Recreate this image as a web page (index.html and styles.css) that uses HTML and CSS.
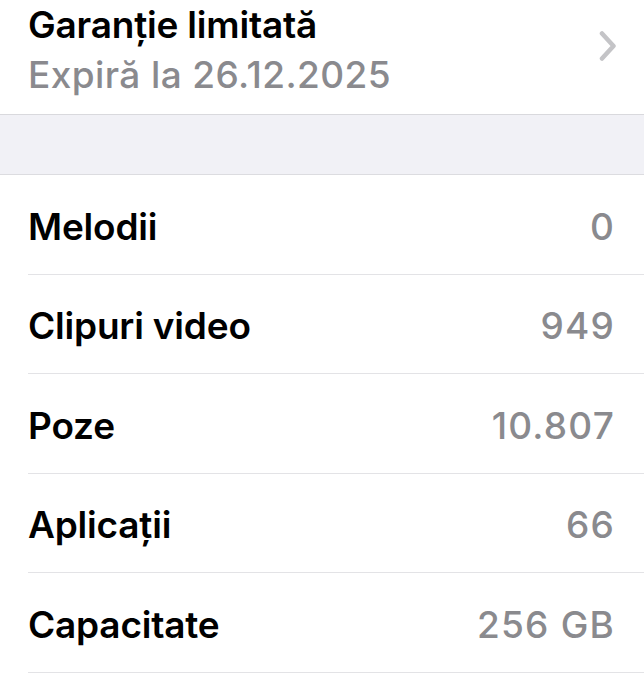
FILE: index.html
```html
<!DOCTYPE html>
<html lang="ro">

<head>
    <meta charset="UTF-8">
    <meta name="viewport" content="width=device-width, initial-scale=1.0">
    <title>Despre</title>
    <link rel="stylesheet" href="styles.css">
</head>

<body>
    <!-- Garantie -->
    <div class="warranty">
        <div class="warranty-text">
            <div class="warranty-title">Garanție limitată</div>
            <div class="warranty-sub">Expiră la 26.12.2025</div>
        </div>
        <svg class="chevron" width="18" height="32" viewBox="0 0 18 32">
            <path d="M3 3.5 L14.5 16 L3 28.5" fill="none" stroke="#c4c4c7" stroke-width="4.5" stroke-linecap="round" stroke-linejoin="round" />
        </svg>
    </div>

    <div class="group-gap"></div>

    <ul class="info-list">
        <li class="info-row">
            <span class="label">Melodii</span>
            <span class="value">0</span>
        </li>
        <li class="info-row">
            <span class="label">Clipuri video</span>
            <span class="value">949</span>
        </li>
        <li class="info-row">
            <span class="label">Poze</span>
            <span class="value">10.807</span>
        </li>
        <li class="info-row">
            <span class="label">Aplicații</span>
            <span class="value">66</span>
        </li>
        <li class="info-row">
            <span class="label">Capacitate</span>
            <span class="value">256 GB</span>
        </li>
    </ul>
</body>

</html>
```

FILE: styles.css
```css
* {
    box-sizing: border-box;
}

body {
    font-family: Inter, "Noto Sans", sans-serif;
    margin: 0;
    padding: 0;
    background-color: #fff;
    color: #000;
    overflow: hidden;
}

.warranty {
    height: 114px;
    display: flex;
    align-items: center;
    justify-content: space-between;
    padding: 0 27px 0 28px;
}

.warranty-text {
    margin-top: -14px;
}

.warranty-title,
.warranty-sub {
    font-size: 37px;
    line-height: 50px;
    font-weight: 600;
    letter-spacing: -0.2px;
}

.warranty-sub {
    color: #8a8a8e;
    font-weight: 500;
    letter-spacing: 0.4px;
}

.chevron {
    margin-top: -22px;
}

.group-gap {
    height: 61px;
    background-color: #f1f1f6;
    border-top: 1px solid #d9d9dd;
    border-bottom: 1px solid #dcdce0;
}

.info-list {
    list-style: none;
    margin: 0;
    padding: 0 0 0 28px;
}

.info-row {
    height: 99.5px;
    display: flex;
    align-items: center;
    justify-content: space-between;
    padding: 4px 29px 0 0;
    border-bottom: 1px solid #e3e3e6;
    font-size: 37px;
    font-weight: 600;
    letter-spacing: -0.2px;
}

.value {
    color: #8a8a8e;
    font-weight: 500;
    letter-spacing: 1.2px;
}
```
